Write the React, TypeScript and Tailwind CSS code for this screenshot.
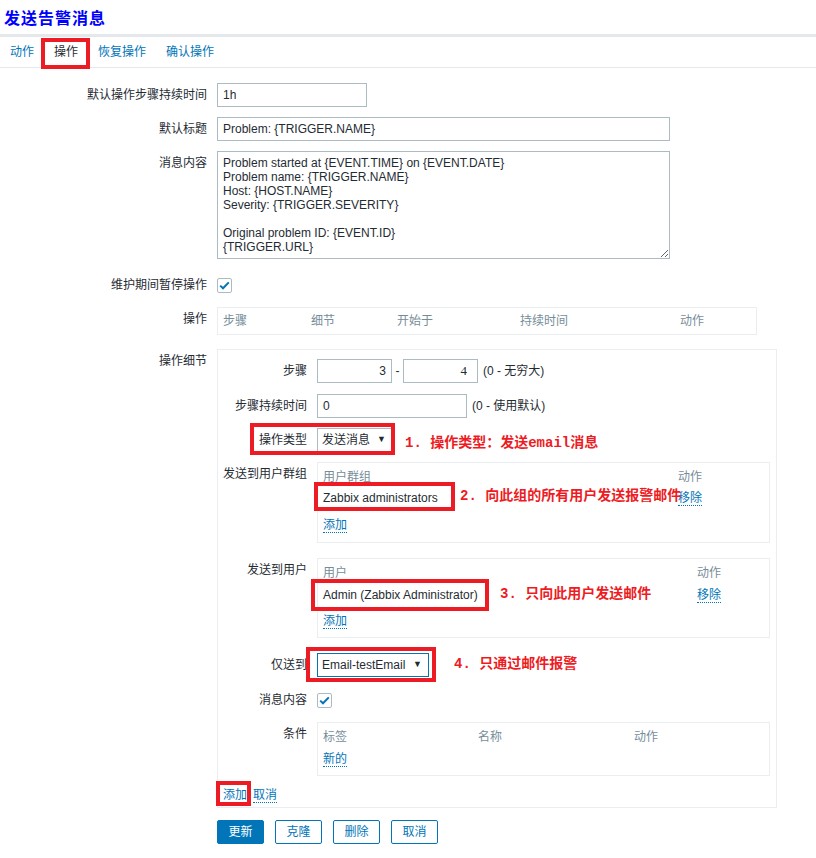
import React from "react";

const RED = "border-[#ed1c24]";

function Check() {
  return (
    <div className="w-[15px] h-[15px] border border-[#acbbc2] rounded-[2px] flex items-center justify-center bg-white">
      <svg width="11" height="9" viewBox="0 0 11 9">
        <path d="M1.2 4.6 L4 7.3 L9.8 1.4" fill="none" stroke="#0275b8" strokeWidth="2" />
      </svg>
    </div>
  );
}

function Link({ children }: { children: React.ReactNode }) {
  return (
    <span className="text-[#0275b8] border-b border-dotted border-[#0275b8] leading-[14px] inline-block">
      {children}
    </span>
  );
}

function Note({ children }: { children: React.ReactNode }) {
  return (
    <span className="whitespace-nowrap text-[14px] font-bold text-[#ed1c24] font-['Liberation_Mono','Noto_Sans_CJK_SC',monospace]">
      {children}
    </span>
  );
}

function Row({ label, children, className = "" }: { label: string; children: React.ReactNode; className?: string }) {
  return (
    <div className={"flex items-start gap-[10px] " + className}>
      <div className="w-[207px] shrink-0 text-right leading-[24px]">{label}</div>
      <div className="flex items-start">{children}</div>
    </div>
  );
}

function InRow({ label, children, className = "" }: { label: string; children: React.ReactNode; className?: string }) {
  return (
    <div className={"relative flex items-start gap-[10px] " + className}>
      <div className="w-[84px] shrink-0 text-right leading-[24px] whitespace-nowrap">{label}</div>
      <div className="flex items-start">{children}</div>
    </div>
  );
}

export default function App() {
  return (
    <div className="w-[816px] h-[858px] overflow-hidden bg-white text-[12px] text-[#1f2c33] font-['Liberation_Sans','Noto_Sans_CJK_SC',sans-serif]">
      {/* header */}
      <div className="h-[34px] flex items-center pl-[4px]">
        <h1 className="text-[16px] font-bold text-[#0000ff] tracking-[1px] font-['Noto_Sans_CJK_SC',sans-serif]">
          发送告警消息
        </h1>
      </div>
      <div className="h-[3px] bg-[#e4e8eb]" />
      {/* tabs */}
      <div className="h-[31px] flex border-b border-[#e6e9eb]">
        <div className="px-[10px] flex items-center text-[#0275b8]">动作</div>
        <div className="relative px-[10px] flex items-center text-[#1f2c33]">
          操作
          <span className={"pointer-events-none absolute left-[-3px] top-[1px] w-[49px] h-[31px] border-4 " + RED} />
        </div>
        <div className="px-[10px] flex items-center text-[#0275b8]">恢复操作</div>
        <div className="px-[10px] flex items-center text-[#0275b8]">确认操作</div>
      </div>

      {/* form */}
      <div className="pt-[15px] flex flex-col">
        <Row label="默认操作步骤持续时间">
          <input readOnly value="1h" className="w-[150px] h-[24px] border border-[#acbbc2] px-[5px] outline-none" />
        </Row>
        <Row label="默认标题" className="mt-[10px]">
          <input
            readOnly
            value="Problem: {TRIGGER.NAME}"
            className="w-[453px] h-[24px] border border-[#acbbc2] px-[5px] outline-none"
          />
        </Row>
        <Row label="消息内容" className="mt-[10px]">
          <textarea
            readOnly
            className="w-[453px] h-[108px] border border-[#acbbc2] px-[5px] pt-[4px] leading-[14px] text-[12px] resize-y outline-none"
            value={
              "Problem started at {EVENT.TIME} on {EVENT.DATE}\nProblem name: {TRIGGER.NAME}\nHost: {HOST.NAME}\nSeverity: {TRIGGER.SEVERITY}\n\nOriginal problem ID: {EVENT.ID}\n{TRIGGER.URL}"
            }
          />
        </Row>
        <Row label="维护期间暂停操作" className="mt-[14px]">
          <div className="h-[24px] flex items-center">
            <Check />
          </div>
        </Row>
        <Row label="操作" className="mt-[10px]">
          <div className="w-[540px] h-[28px] border border-[#ebeef0] pl-[5px] flex items-center text-[#768d99]">
            <div className="w-[88px]">步骤</div>
            <div className="w-[86px]">细节</div>
            <div className="w-[123px]">开始于</div>
            <div className="w-[160px]">持续时间</div>
            <div>动作</div>
          </div>
        </Row>
        <Row label="操作细节" className="mt-[14px]">
          <div className="w-[560px] border border-[#ebeef0] pl-[5px] pt-[9px] pb-[4px] flex flex-col">
            <InRow label="步骤">
              <input readOnly value="3" className="w-[75px] h-[24px] border border-[#acbbc2] px-[5px] text-right outline-none" />
              <span className="leading-[24px] w-[11px] text-center">-</span>
              <input
                readOnly
                value="4"
                className="w-[75px] h-[24px] border border-[#acbbc2] px-[10px] text-right outline-none font-['Liberation_Serif',serif] text-[13px]"
              />
              <span className="leading-[24px] ml-[5px]">(0 - 无穷大)</span>
            </InRow>
            <InRow label="步骤持续时间" className="mt-[11px]">
              <input readOnly value="0" className="w-[150px] h-[24px] border border-[#acbbc2] px-[5px] outline-none" />
              <span className="leading-[24px] ml-[5px]">(0 - 使用默认)</span>
            </InRow>
            <InRow label="操作类型" className="mt-[10px]">
              <div className="w-[75px] h-[24px] border border-[#acbbc2] pl-[4px] pr-[5px] flex items-center justify-between">
                <span>发送消息</span>
                <span className="text-[9px]">▼</span>
              </div>
              <span className="ml-[13px] h-[24px] pt-[3px] leading-[24px]">
                <Note>1. 操作类型：发送email消息</Note>
              </span>
              <span className={"pointer-events-none absolute left-[27px] top-[-5px] w-[145px] h-[32px] border-4 " + RED} />
            </InRow>
            <InRow label="发送到用户群组" className="mt-[10px]">
              <div className="w-[453px] h-[81px] border border-[#ebeef0] pl-[5px] pt-[6px] flex flex-col">
                <div className="flex leading-[16px] text-[#768d99]">
                  <div className="w-[355px]">用户群组</div>
                  <div>动作</div>
                </div>
                <div className="flex leading-[16px] mt-[5px]">
                  <div className="w-[355px]">
                    <span className="relative inline-block">
                      Zabbix administrators
                      <span className={"pointer-events-none absolute left-[-9px] top-[-8px] w-[141px] h-[29px] border-4 " + RED} />
                      <span className="absolute left-[137px] top-[-2px] leading-[16px]">
                        <Note>2. 向此组的所有用户发送报警邮件</Note>
                      </span>
                    </span>
                  </div>
                  <div>
                    <Link>移除</Link>
                  </div>
                </div>
                <div className="mt-[11px] leading-[16px]">
                  <Link>添加</Link>
                </div>
              </div>
            </InRow>
            <InRow label="发送到用户" className="mt-[15px]">
              <div className="w-[453px] h-[80px] border border-[#ebeef0] pl-[5px] pt-[6px] flex flex-col">
                <div className="flex leading-[16px] text-[#768d99]">
                  <div className="w-[374px]">用户</div>
                  <div>动作</div>
                </div>
                <div className="flex leading-[16px] mt-[6px]">
                  <div className="w-[374px]">
                    <span className="relative inline-block">
                      Admin (Zabbix Administrator)
                      <span className={"pointer-events-none absolute left-[-12px] top-[-8px] w-[178px] h-[32px] border-4 " + RED} />
                      <span className="absolute left-[177px] top-[-1px] leading-[16px]">
                        <Note>3. 只向此用户发送邮件</Note>
                      </span>
                    </span>
                  </div>
                  <div>
                    <Link>移除</Link>
                  </div>
                </div>
                <div className="mt-[10px] leading-[16px]">
                  <Link>添加</Link>
                </div>
              </div>
            </InRow>
            <InRow label="仅送到" className="mt-[15px]">
              <div className="relative">
                <div className="w-[112px] h-[24px] border border-[#0275b8] pl-[4px] pr-[6px] flex items-center justify-between">
                  <span>Email-testEmail</span>
                  <span className="text-[9px]">▼</span>
                </div>
                <span className={"pointer-events-none absolute left-[-11px] top-[-6px] w-[130px] h-[35px] border-4 " + RED} />
              </div>
              <span className="ml-[25px] leading-[24px] -mt-[1px]">
                <Note>4. 只通过邮件报警</Note>
              </span>
            </InRow>
            <InRow label="消息内容" className="mt-[11px]">
              <div className="h-[24px] flex items-center">
                <Check />
              </div>
            </InRow>
            <InRow label="条件" className="mt-[10px]">
              <div className="w-[453px] h-[54px] border border-[#ebeef0] pl-[5px] pt-[6px] flex flex-col">
                <div className="flex leading-[16px] text-[#768d99]">
                  <div className="w-[155px]">标签</div>
                  <div className="w-[156px]">名称</div>
                  <div>动作</div>
                </div>
                <div className="mt-[6px] leading-[16px]">
                  <Link>新的</Link>
                </div>
              </div>
            </InRow>
            <div className="mt-[11px] flex leading-[16px]">
              <span className="relative inline-block">
                <Link>添加</Link>
                <span className={"pointer-events-none absolute left-[-7px] top-[-6px] w-[35px] h-[25px] border-4 " + RED} />
              </span>
              <span className="ml-[6px]">
                <Link>取消</Link>
              </span>
            </div>
          </div>
        </Row>
        <div className="mt-[12px] pl-[217px] flex gap-[11px]">
          <button className="w-[47px] h-[24px] rounded-[2px] bg-[#0275b8] text-white border border-[#0275b8]">更新</button>
          <button className="w-[47px] h-[24px] rounded-[2px] bg-white text-[#0275b8] border border-[#0275b8]">克隆</button>
          <button className="w-[47px] h-[24px] rounded-[2px] bg-white text-[#0275b8] border border-[#0275b8]">删除</button>
          <button className="w-[47px] h-[24px] rounded-[2px] bg-white text-[#0275b8] border border-[#0275b8]">取消</button>
        </div>
      </div>
    </div>
  );
}
